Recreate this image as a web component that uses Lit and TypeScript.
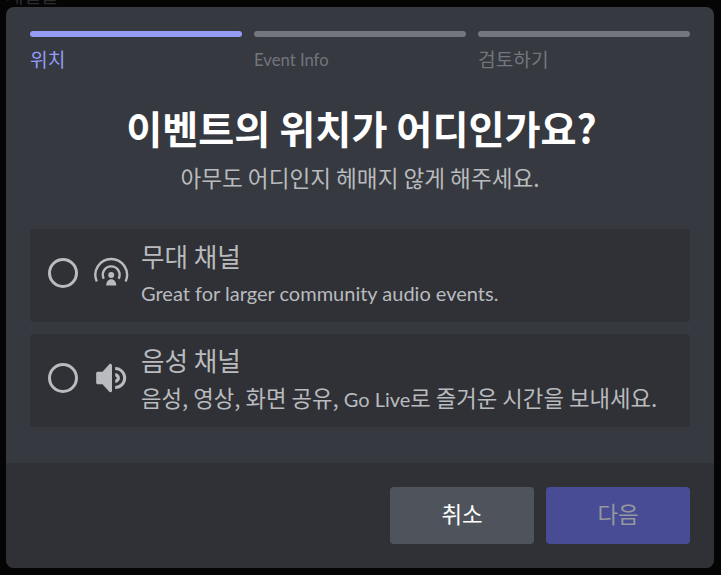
import { LitElement, html, css } from "lit";
import { customElement } from "lit/decorators.js";

@customElement("app-root")
export class AppRoot extends LitElement {
  static styles = css`
    :host {
      display: block;
      width: 721px;
      height: 575px;
      background: #050505;
      font-family: "Noto Sans CJK KR", sans-serif;
      overflow: hidden;
    }
    .backdrop {
      position: relative;
      box-sizing: border-box;
      height: 575px;
      padding: 7px 7px 7px 6px;
    }
    .behind {
      position: absolute;
      left: 6px;
      top: -17px;
      font-size: 19px;
      line-height: 24px;
      color: #2c2c2e;
    }
    .modal {
      position: relative;
      height: 561px;
      display: flex;
      flex-direction: column;
      background: #36393f;
      border-radius: 8px;
      overflow: hidden;
    }
    .body {
      flex: 1;
      padding: 24px 24px 0;
    }
    .steps {
      display: flex;
      gap: 12px;
    }
    .step {
      flex: 1;
    }
    .bar {
      height: 6px;
      border-radius: 3px;
      background: #72767d;
    }
    .step span {
      display: block;
      margin-top: 8px;
      font-size: 19.2px;
      line-height: 28px;
      color: #72767d;
    }
    .step.active .bar {
      background: #949cf7;
    }
    .step.active span {
      color: #949cf7;
    }
    .latin {
      font-family: Lato, sans-serif;
    }
    .step span.latin {
      font-size: 16.7px;
      line-height: 30px;
      margin-bottom: -2px;
    }
    h1 {
      margin: 26px 0 0;
      padding-left: 3px;
      text-align: center;
      font-size: 39.2px;
      line-height: 56px;
      font-weight: 700;
      color: #fff;
    }
    .sub {
      margin: 7px 0 0;
      text-align: center;
      font-size: 22.6px;
      line-height: 32px;
      color: #b9bbbe;
    }
    .options {
      margin-top: 35px;
      display: flex;
      flex-direction: column;
      gap: 12px;
    }
    .option {
      box-sizing: border-box;
      height: 93px;
      display: flex;
      align-items: center;
      padding: 0 18px 5px;
      background: #2f3136;
      border-radius: 4px;
    }
    .radio {
      box-sizing: border-box;
      width: 30px;
      height: 30px;
      border: 3px solid #b9bbbe;
      border-radius: 50%;
      margin-right: 15px;
    }
    .option svg {
      width: 38px;
      height: 38px;
      margin-right: 10px;
      color: #b9bbbe;
    }
    .name {
      font-size: 25.6px;
      line-height: 34px;
      color: #b9bbbe;
    }
    .desc {
      margin-top: 5px;
      font-size: 22.3px;
      line-height: 30px;
      white-space: nowrap;
      color: #b9bbbe;
    }
    .desc .latin,
    .desc.latin {
      font-size: 20px;
    }
    .footer {
      height: 105px;
      box-sizing: border-box;
      padding: 24px;
      display: flex;
      justify-content: flex-end;
      gap: 12px;
      background: #2f3136;
    }
    button {
      width: 144px;
      height: 57px;
      border: 0;
      border-radius: 4px;
      padding: 0 0 6px;
      font-family: inherit;
      font-size: 22.4px;
      color: #fff;
    }
    .cancel {
      background: #4f545c;
    }
    .next {
      background: #474c94;
      color: #96979f;
    }
  `;

  render() {
    return html`<div class="backdrop">
      <div class="behind">채널들</div>
      <div class="modal">
        <div class="body">
          <div class="steps">
            <div class="step active"><div class="bar"></div><span>위치</span></div>
            <div class="step"><div class="bar"></div><span class="latin">Event Info</span></div>
            <div class="step"><div class="bar"></div><span>검토하기</span></div>
          </div>
          <h1>이벤트의 위치가 어디인가요?</h1>
          <p class="sub">아무도 어디인지 헤매지 않게 해주세요.</p>
          <div class="options">
            <div class="option">
              <div class="radio"></div>
              <svg viewBox="0 0 24 24" fill="currentColor">
                <circle cx="11.5" cy="13.2" r="1.9" />
                <path d="M8.3 19.9c0-2.2 1.4-3.9 3.2-3.9s3.2 1.7 3.2 3.9Z" />
                <path fill="none" stroke="currentColor" stroke-width="1.5" d="M6.8 15.6A5.3 5.3 0 1 1 16.2 15.6" />
                <path fill="none" stroke="currentColor" stroke-width="1.5" d="M2.4 17.3A10 10 0 1 1 20.6 17.3" />
              </svg>
              <div>
                <div class="name">무대 채널</div>
                <div class="desc latin">Great for larger community audio events.</div>
              </div>
            </div>
            <div class="option">
              <div class="radio"></div>
              <svg viewBox="0 0 24 24" fill="currentColor">
                <path d="M11.383 3.079C11.009 2.925 10.579 3.01 10.293 3.296L6 8.002H3C2.45 8.002 2 8.453 2 9.002V15.002C2 15.552 2.45 16.002 3 16.002H6L10.293 20.71C10.579 20.996 11.009 21.082 11.383 20.927C11.757 20.772 12 20.407 12 20.002V4.002C12 3.599 11.757 3.232 11.383 3.079ZM14 5.002V7.002C16.757 7.002 19 9.246 19 12.002C19 14.759 16.757 17.002 14 17.002V19.002C17.86 19.002 21 15.863 21 12.002C21 8.143 17.86 5.002 14 5.002ZM14 9.002C15.654 9.002 17 10.349 17 12.002C17 13.657 15.654 15.002 14 15.002V13.002C14.551 13.002 15 12.553 15 12.002C15 11.451 14.551 11.002 14 11.002V9.002Z" />
              </svg>
              <div>
                <div class="name">음성 채널</div>
                <div class="desc">음성, 영상, 화면 공유, <span class="latin">Go Live</span>로 즐거운 시간을 보내세요.</div>
              </div>
            </div>
          </div>
        </div>
        <div class="footer">
          <button class="cancel">취소</button>
          <button class="next">다음</button>
        </div>
      </div>
    </div>`;
  }
}
